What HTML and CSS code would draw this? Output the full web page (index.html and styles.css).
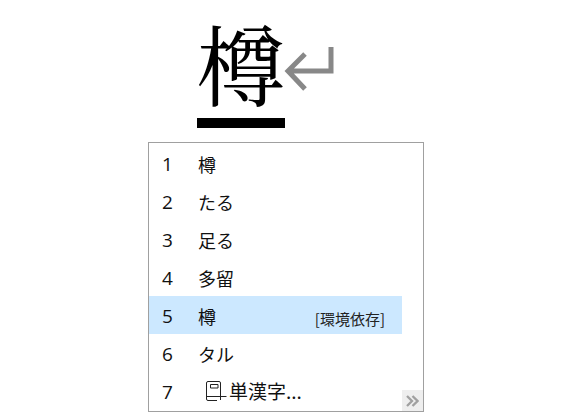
FILE: index.html
```html
<!DOCTYPE html>
<html lang="ja">
<head>
<meta charset="utf-8">
<title>IME</title>
<link rel="stylesheet" href="styles.css">
</head>
<body>
<div class="composition">
  <div class="comp-char">樽</div>
  <svg class="enter" width="50" height="46" viewBox="0 0 50 46"><path d="M47 0V24H4M21 7L4 24L21 42" fill="none" stroke="#888" stroke-width="5"/></svg>
</div>
<div class="popup">
  <div class="list">
    <div class="row"><span class="num">1</span><span class="cand">樽</span></div>
    <div class="row"><span class="num">2</span><span class="cand">たる</span></div>
    <div class="row"><span class="num">3</span><span class="cand">足る</span></div>
    <div class="row"><span class="num">4</span><span class="cand">多留</span></div>
    <div class="row selected"><span class="num">5</span><span class="cand">樽</span><span class="note">[環境依存]</span></div>
    <div class="row"><span class="num">6</span><span class="cand">タル</span></div>
    <div class="row"><span class="num">7</span>
      <svg class="dict" width="21" height="20" viewBox="0 0 21 20"><path d="M14.500 11V2Q14.500 .5 13 .5H2Q.5 .5 .5 2V18Q.5 19.500 2 19.500H11M4.500 3.500H12V7H4.500ZM.5 15.500H20.500M14.500 11V19" fill="none" stroke="#222" stroke-width="1"/></svg>
      <span class="cand single">単漢字...</span>
    </div>
  </div>
  <div class="side">
    <div class="more"><svg width="13" height="12" viewBox="0 0 13 12"><path d="M1 1L6 6L1 11M6.500 1L11.500 6L6.500 11" fill="none" stroke="#a0a0a0" stroke-width="2.300"/></svg></div>
  </div>
</div>
</body>
</html>
```
FILE: styles.css
```css
html, body { margin: 0; padding: 0; background: #fff; }
body { width: 580px; height: 418px; overflow: hidden; font-family: "Noto Sans CJK JP", sans-serif; color: #111; }
.composition { display: flex; align-items: flex-start; margin-left: 197px; padding-top: 16px; height: 124px; box-sizing: border-box; margin-bottom: 18px; }
.comp-char { width: 88px; height: 102px; border-bottom: 10px solid #000; font-family: "Noto Serif CJK JP", "Noto Sans CJK JP", serif; font-size: 88px; line-height: 90px; color: #000; }
.enter { margin-top: 31px; margin-left: -1px; }
.popup { display: flex; width: 276px; height: 270px; box-sizing: border-box; margin-left: 148px; border: 1px solid #a0a0a0; padding-top: 1px; }
.list { width: 253px; }
.side { flex: 1; display: flex; align-items: flex-end; }
.row { display: flex; align-items: center; height: 38px; position: relative; font-size: 18px; }
.selected { background: #cce8ff; }
.num { width: 49px; padding-left: 13px; padding-top: 3px; box-sizing: border-box; font-family: "Open Sans", sans-serif; font-size: 19px; line-height: 35px; }
.cand { line-height: 38px; padding-top: 2px; }
.single { margin-left: 2px; font-size: 19px; padding-top: 0; line-height: 40px; }
.dict { margin-left: 8px; }
.note { position: absolute; right: 17px; top: 13px; font-size: 15px; line-height: 20px; color: #222; }
.more { width: 21px; height: 21px; background: #eee; display: flex; align-items: center; justify-content: center; }
```
